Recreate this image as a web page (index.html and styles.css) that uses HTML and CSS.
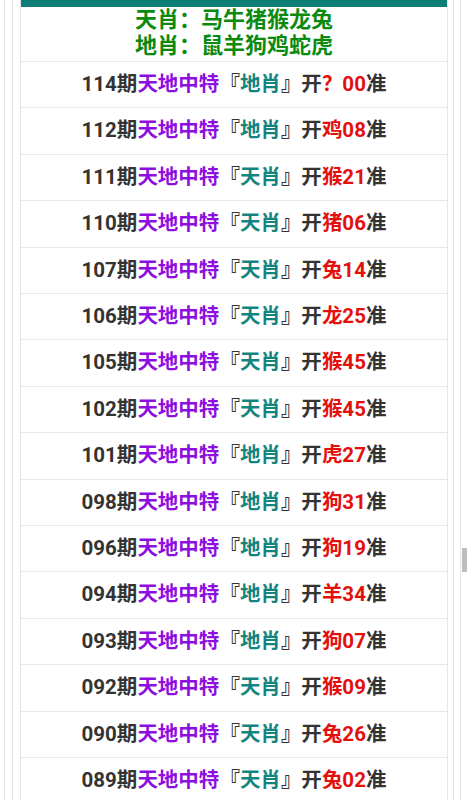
FILE: index.html
```html
<!DOCTYPE html>
<html>
<head>
    <meta charset="utf-8">
    <title>天地中特</title>
    <link rel="stylesheet" href="styles.css">
</head>
<body>
    <div class="wrap">
        <div class="wrap2">
            <div class="box">
                <div class="topbar"></div>
                <div class="head">
                    <p>天肖：马牛猪猴龙兔</p>
                    <p>地肖：鼠羊狗鸡蛇虎</p>
                </div>
                <ul class="list">
                    <li>114期<span class="pu">天地中特</span>『<span class="tl">地肖</span>』开<span class="rd">？00</span>准</li>
                    <li>112期<span class="pu">天地中特</span>『<span class="tl">地肖</span>』开<span class="rd">鸡08</span>准</li>
                    <li>111期<span class="pu">天地中特</span>『<span class="tl">天肖</span>』开<span class="rd">猴21</span>准</li>
                    <li>110期<span class="pu">天地中特</span>『<span class="tl">天肖</span>』开<span class="rd">猪06</span>准</li>
                    <li>107期<span class="pu">天地中特</span>『<span class="tl">天肖</span>』开<span class="rd">兔14</span>准</li>
                    <li>106期<span class="pu">天地中特</span>『<span class="tl">天肖</span>』开<span class="rd">龙25</span>准</li>
                    <li>105期<span class="pu">天地中特</span>『<span class="tl">天肖</span>』开<span class="rd">猴45</span>准</li>
                    <li>102期<span class="pu">天地中特</span>『<span class="tl">天肖</span>』开<span class="rd">猴45</span>准</li>
                    <li>101期<span class="pu">天地中特</span>『<span class="tl">地肖</span>』开<span class="rd">虎27</span>准</li>
                    <li>098期<span class="pu">天地中特</span>『<span class="tl">地肖</span>』开<span class="rd">狗31</span>准</li>
                    <li>096期<span class="pu">天地中特</span>『<span class="tl">地肖</span>』开<span class="rd">狗19</span>准</li>
                    <li>094期<span class="pu">天地中特</span>『<span class="tl">地肖</span>』开<span class="rd">羊34</span>准</li>
                    <li>093期<span class="pu">天地中特</span>『<span class="tl">地肖</span>』开<span class="rd">狗07</span>准</li>
                    <li>092期<span class="pu">天地中特</span>『<span class="tl">天肖</span>』开<span class="rd">猴09</span>准</li>
                    <li>090期<span class="pu">天地中特</span>『<span class="tl">天肖</span>』开<span class="rd">兔26</span>准</li>
                    <li>089期<span class="pu">天地中特</span>『<span class="tl">天肖</span>』开<span class="rd">兔02</span>准</li>
                </ul>
            </div>
        </div>
    </div>
    <div class="thumb"></div>
</body>
</html>
```

FILE: styles.css
```css
body {
    margin: 0;
    padding: 0;
    background: #fff;
    font-family: Roboto, "Noto Sans CJK SC", sans-serif;
    color: #333;
    overflow: hidden;
}

.wrap {
    margin-left: 4px;
    width: 442px;
    border-left: 1px solid #e2e2e2;
    border-right: 1px solid #e2e2e2;
    padding: 0 6px 0 7px;
    min-height: 800px;
}

.wrap2 {
    border-left: 1px solid #e2e2e2;
    border-right: 1px solid #e2e2e2;
    padding: 0 5px 0 7px;
    min-height: 800px;
}

.box {
    border-left: 1px solid #e6e6e6;
    border-right: 1px solid #e6e6e6;
    min-height: 800px;
}

.topbar {
    height: 7px;
    background: #0e7d78;
}

.head {
    padding: 0 0 2px;
    border-bottom: 1px solid #e8e8e8;
    text-align: center;
}

.head p {
    margin: 0;
    font-size: 22px;
    line-height: 26px;
    font-weight: bold;
    color: #0b8a10;
}

.list {
    list-style: none;
    margin: 0;
    padding: 0;
}

.list li {
    text-align: center;
    font-size: 20.5px;
    font-weight: bold;
    line-height: 45.4px;
    border-bottom: 1px solid #e8e8e8;
}

.pu {
    color: #8d0fe0;
}

.tl {
    color: #138580;
}

.rd {
    color: #e3100e;
}

.thumb {
    position: absolute;
    left: 462px;
    top: 548px;
    width: 5px;
    height: 24px;
    background: #bdbdbd;
}
```
